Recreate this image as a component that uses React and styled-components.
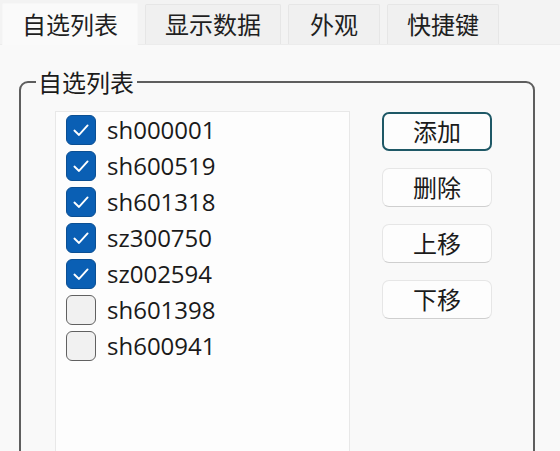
import React, { useState } from "react";
import styled, { createGlobalStyle } from "styled-components";

const Global = createGlobalStyle`
  html, body { margin: 0; padding: 0; }
  body {
    background: #f3f3f3;
    font-family: "Noto Sans CJK SC", "Noto Sans", sans-serif;
    color: #1b1b1b;
    overflow: hidden;
  }
`;

const Window = styled.div`
  width: 560px;
  height: 451px;
  display: flex;
  flex-direction: column;
  background: #f3f3f3;
  overflow: hidden;
`;

const TabBar = styled.div`
  display: flex;
  align-items: flex-end;
  gap: 7px;
  padding: 3px 0 0 2px;
  height: 41px;
  box-sizing: content-box;
  border-bottom: 1px solid #ececec;
`;

const Tab = styled.div`
  display: flex;
  align-items: center;
  justify-content: center;
  height: ${(p) => (p.$active ? "42px" : "40px")};
  box-sizing: border-box;
  padding: 0 ${(p) => p.$pad || 19}px;
  font-size: 24px;
  line-height: 1.45;
  color: #1f1f1f;
  background: ${(p) => (p.$active ? "#fafafa" : "#f0f0f0")};
  border: 1px solid ${(p) => (p.$active ? "#f7f7f7" : "#e6e6e6")};
  border-bottom: none;
  margin-bottom: ${(p) => (p.$active ? "-1px" : "0")};
  border-radius: 2px 2px 0 0;
`;

const Content = styled.div`
  flex: 1;
  background: #f9f9f9;
  padding: 20px 25px 0 19px;
`;

const Group = styled.fieldset`
  margin: 0;
  border: 2px solid #5e5e5e;
  border-radius: 9px;
  padding: 11px 0 0 34px;
  height: 400px;
  display: flex;
  gap: 32px;
  align-items: flex-start;
`;

const Legend = styled.legend`
  font-size: 24px;
  line-height: 1.45;
  padding: 0 3px 0 2px;
  margin-left: -19px;
  color: #1b1b1b;
`;

const ListBox = styled.div`
  width: 295px;
  height: 360px;
  box-sizing: border-box;
  background: #fdfdfd;
  border: 1px solid #e8e8e8;
  padding: 0 0 0 10px;
  display: flex;
  flex-direction: column;
`;

const Row = styled.label`
  display: flex;
  align-items: center;
  height: 36px;
  gap: 11px;
  cursor: pointer;
`;

const Box = styled.span`
  width: 30px;
  height: 30px;
  box-sizing: border-box;
  border-radius: 6px;
  display: flex;
  align-items: center;
  justify-content: center;
  background: ${(p) => (p.$checked ? "#0a5fb4" : "#f1f1f1")};
  border: ${(p) => (p.$checked ? "1.5px solid #0b4f93" : "1.5px solid #616161")};
`;

const Code = styled.span`
  font-family: "Open Sans", "Noto Sans", sans-serif;
  font-size: 24px;
  line-height: 1;
  color: #1a1a1a;
`;

const Buttons = styled.div`
  display: flex;
  flex-direction: column;
  gap: 17px;
  margin-top: 1px;
`;

const Button = styled.button`
  width: 110px;
  height: 39px;
  box-sizing: border-box;
  display: flex;
  align-items: center;
  justify-content: center;
  font-family: "Noto Sans CJK SC", sans-serif;
  font-size: 24px;
  line-height: 1.45;
  color: #1b1b1b;
  background: #fdfdfd;
  border-radius: 7px;
  padding: 0;
  border: ${(p) => (p.$primary ? "2px solid #1e5866" : "1px solid #e6e6e6")};
  border-bottom-color: ${(p) => (p.$primary ? "#1e5866" : "#cfcfcf")};
`;

const Check = () => (
  <svg width="22" height="22" viewBox="0 0 20 20">
    <path d="M4 10.5 L8.2 14.5 L16 5.8" fill="none" stroke="#ffffff" strokeWidth="1.7" strokeLinecap="round" strokeLinejoin="round" />
  </svg>
);

const initial = [
  ["sh000001", true],
  ["sh600519", true],
  ["sh601318", true],
  ["sz300750", true],
  ["sz002594", true],
  ["sh601398", false],
  ["sh600941", false],
];

export default function App() {
  const [items, setItems] = useState(initial);
  const toggle = (i) =>
    setItems((s) => s.map((it, j) => (j === i ? [it[0], !it[1]] : it)));
  return (
    <Window>
      <Global />
      <TabBar>
        <Tab $active>自选列表</Tab>
        <Tab>显示数据</Tab>
        <Tab $pad={21}>外观</Tab>
        <Tab>快捷键</Tab>
      </TabBar>
      <Content>
        <Group>
          <Legend>自选列表</Legend>
          <ListBox>
            {items.map(([code, checked], i) => (
              <Row key={code} onClick={() => toggle(i)}>
                <Box $checked={checked}>{checked && <Check />}</Box>
                <Code>{code}</Code>
              </Row>
            ))}
          </ListBox>
          <Buttons>
            <Button $primary>添加</Button>
            <Button>删除</Button>
            <Button>上移</Button>
            <Button>下移</Button>
          </Buttons>
        </Group>
      </Content>
    </Window>
  );
}
